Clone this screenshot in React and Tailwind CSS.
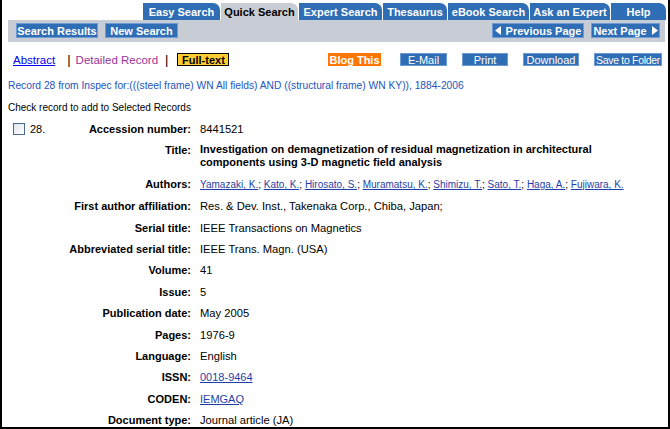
import React from "react";

const tabs = [
  { label: "Easy Search", w: "w-[77px]" },
  { label: "Quick Search", w: "w-[77px]", active: true },
  { label: "Expert Search", w: "w-[83px]" },
  { label: "Thesaurus", w: "w-[64px]" },
  { label: "eBook Search", w: "w-[81px]" },
  { label: "Ask an Expert", w: "w-[80px]" },
  { label: "Help", w: "w-[55px]" },
];

const authors = [
  "Yamazaki, K.",
  "Kato, K.",
  "Hirosato, S.",
  "Muramatsu, K.",
  "Shimizu, T.",
  "Sato, T.",
  "Haga, A.",
  "Fujiwara, K.",
];

function Row({ label, children, first }) {
  return (
    <div className="flex items-start">
      <div className="w-[189px] shrink-0 flex items-start">
        {first ? (
          <>
            <span className="ml-[11px] mt-[1px] w-[12px] h-[12px] border border-[#4a6a8e] bg-gradient-to-br from-[#dfe3ea] to-white shrink-0" />
            <span className="ml-[5px]">28.</span>
          </>
        ) : null}
        <span className="ml-auto font-bold text-right whitespace-nowrap">{label}</span>
      </div>
      <div className="ml-[9px] flex-1 pr-[20px] text-[11.2px]">{children}</div>
    </div>
  );
}

export default function App() {
  return (
    <div className="w-[670px] h-[429px] overflow-hidden bg-white border-x-2 border-b-2 border-black font-['Liberation_Sans',Arial,sans-serif] text-[11px] text-black leading-[14px]">
      {/* Tabs */}
      <div className="flex pl-[141px] pt-[3px] gap-[1px]">
        {tabs.map((t) => (
          <div
            key={t.label}
            className={
              "h-[17px] rounded-tr-[7px] flex items-center justify-center font-bold text-[11px] whitespace-nowrap " +
              t.w +
              (t.active ? " bg-[#c8ccd4] text-black" : " bg-[#2f6db5] text-white")
            }
          >
            {t.label}
          </div>
        ))}
      </div>
      {/* Gray bar */}
      <div className="ml-[6px] mr-[3px] h-[22px] bg-[#c8ccd4] flex items-start pt-[3px] pl-[8px] pr-[5px]">
        <div className="h-[15px] w-[82px] bg-[#2f6db5] border border-[#6d9bd4] text-white font-bold flex items-center justify-center whitespace-nowrap">
          Search Results
        </div>
        <div className="ml-[7px] h-[15px] w-[73px] bg-[#2f6db5] border border-[#6d9bd4] text-white font-bold flex items-center justify-center whitespace-nowrap">
          New Search
        </div>
        <div className="ml-auto h-[15px] w-[92px] bg-[#2f6db5] border border-[#6d9bd4] text-white font-bold flex items-center justify-center gap-[5px] whitespace-nowrap">
          <svg width="6" height="9" viewBox="0 0 6 9"><path d="M6 0 L0 4.5 L6 9 Z" fill="white" /></svg>
          Previous Page
        </div>
        <div className="ml-[7px] h-[15px] w-[69px] bg-[#2f6db5] border border-[#6d9bd4] text-white font-bold flex items-center justify-center gap-[5px] whitespace-nowrap">
          Next Page
          <svg width="6" height="9" viewBox="0 0 6 9"><path d="M0 0 L6 4.5 L0 9 Z" fill="white" /></svg>
        </div>
      </div>
      {/* Links row */}
      <div className="flex items-center mt-[11px] h-[13px]">
        <a className="ml-[11px] text-[#0000ee] underline text-[11.5px]">Abstract</a>
        <span className="ml-[12px] text-[13px]">|</span>
        <span className="ml-[5px] text-[#993399] text-[11.5px]">Detailed Record</span>
        <span className="ml-[7px] text-[13px]">|</span>
        <span className="ml-[9px] h-[13px] w-[52px] bg-[#ffcc33] border border-black font-bold flex items-center justify-center">
          Full-text
        </span>
        <div className="ml-auto mr-[6px] flex items-center">
          <span className="h-[13px] w-[53px] bg-[#ff7700] text-white font-bold flex items-center justify-center whitespace-nowrap">
            Blog This
          </span>
          <span className="ml-[19px] h-[13px] w-[47px] bg-[#2f6db5] border border-[#6d9bd4] text-white flex items-center justify-center">
            E-Mail
          </span>
          <span className="ml-[15px] h-[13px] w-[46px] bg-[#2f6db5] border border-[#6d9bd4] text-white flex items-center justify-center">
            Print
          </span>
          <span className="ml-[15px] h-[13px] w-[56px] bg-[#2f6db5] border border-[#6d9bd4] text-white flex items-center justify-center">
            Download
          </span>
          <span className="ml-[15px] h-[13px] w-[68px] bg-[#2f6db5] border border-[#6d9bd4] text-white flex items-center justify-center whitespace-nowrap text-[10.5px] tracking-[-0.3px]">
            Save to Folder
          </span>
        </div>
      </div>
      {/* Record line */}
      <div className="mt-[13px] ml-[6px] text-[#2255bb] text-[10.25px] whitespace-nowrap">
        Record 28 from Inspec for:(((steel frame) WN All fields) AND ((structural frame) WN KY)), 1884-2006
      </div>
      <div className="mt-[8px] ml-[6px] text-[10px]">Check record to add to Selected Records</div>
      {/* Record */}
      <div className="mt-[7px] flex flex-col gap-[7.4px]">
        <Row label="Accession number:" first>8441521</Row>
        <Row label="Title:">
          <span className="font-bold leading-[13px] block text-[11px]">
            Investigation on demagnetization of residual magnetization in architectural components using 3-D magnetic field analysis
          </span>
        </Row>
        <Row label="Authors:">
          <span className="text-[10px]">
            {authors.map((a, i) => (
              <React.Fragment key={a}>
                <a className="text-[#1f3fa8] underline">{a}</a>
                {i < authors.length - 1 ? "; " : ""}
              </React.Fragment>
            ))}
          </span>
        </Row>
        <Row label="First author affiliation:">Res. &amp; Dev. Inst., Takenaka Corp., Chiba, Japan;</Row>
        <Row label="Serial title:">IEEE Transactions on Magnetics</Row>
        <Row label="Abbreviated serial title:">IEEE Trans. Magn. (USA)</Row>
        <Row label="Volume:">41</Row>
        <Row label="Issue:">5</Row>
        <Row label="Publication date:">May 2005</Row>
        <Row label="Pages:">1976-9</Row>
        <Row label="Language:">English</Row>
        <Row label="ISSN:"><a className="text-[#1f3fa8] underline text-[11px]">0018-9464</a></Row>
        <Row label="CODEN:"><a className="text-[#1f3fa8] underline text-[11px]">IEMGAQ</a></Row>
        <Row label="Document type:">Journal article (JA)</Row>
      </div>
    </div>
  );
}
